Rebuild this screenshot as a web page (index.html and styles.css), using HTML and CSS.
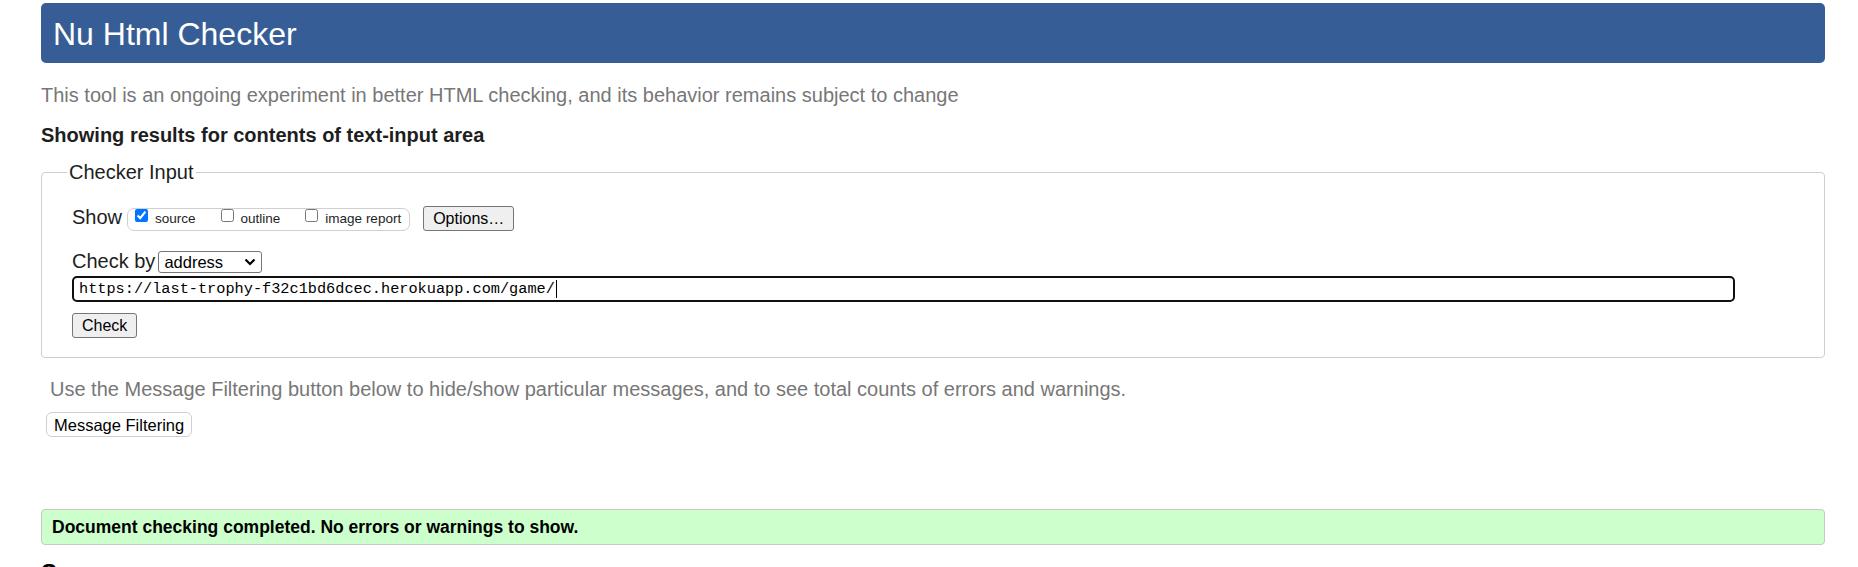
FILE: index.html
```html
<!DOCTYPE html>
<html lang="en">
<head>
<meta charset="utf-8">
<title>Nu Html Checker</title>
<link rel="stylesheet" href="styles.css">
</head>
<body>
  <h1 class="banner">Nu Html Checker</h1>
  <p class="intro">This tool is an ongoing experiment in better HTML checking, and its behavior remains subject to change</p>
  <p class="showing">Showing results for contents of text-input area</p>

  <fieldset class="checker">
    <legend class="checker-legend">Checker Input</legend>
    <div class="form">
      <div class="show-row">
        <span class="row-label">Show</span>
        <div class="opts">
          <label class="opt"><input type="checkbox" class="cb" checked><span class="opt-text">source</span></label>
          <label class="opt"><input type="checkbox" class="cb"><span class="opt-text">outline</span></label>
          <label class="opt"><input type="checkbox" class="cb"><span class="opt-text">image report</span></label>
        </div>
        <button class="btn btn-options" type="button">Options…</button>
      </div>
      <div class="by-row">
        <span class="row-label by-label">Check by</span>
        <div class="select">
          <span class="select-text">address</span>
          <svg class="chev" width="12" height="8" viewBox="0 0 12 8"><path d="M1.5 1.5 L6 6 L10.5 1.5" fill="none" stroke="#000" stroke-width="2.2"/></svg>
        </div>
      </div>
      <div class="url-field"><span class="url-text">https://last-trophy-f32c1bd6dcec.herokuapp.com/game/</span><span class="caret"></span></div>
      <button class="btn btn-check" type="button">Check</button>
    </div>
  </fieldset>

  <p class="filter-note">Use the Message Filtering button below to hide/show particular messages, and to see total counts of errors and warnings.</p>
  <button class="btn-filter" type="button">Message Filtering</button>

  <div class="success">Document checking completed. No errors or warnings to show.</div>
  <h2 class="source-title">Source</h2>
</body>
</html>
```

FILE: styles.css
```css
html, body {
  margin: 0;
  background: #fff;
}
body {
  padding: 3px 33px 0 41px;
  font-family: "Liberation Sans", Arial, sans-serif;
  color: #000;
  height: 564px;
  overflow: hidden;
}

.banner {
  margin: 0;
  height: 60px;
  box-sizing: border-box;
  padding: 13px 12px 10px;
  background: #365d95;
  color: #fff;
  border-radius: 5px;
  font-size: 32px;
  font-weight: normal;
  line-height: 37px;
}

.intro {
  margin: 21px 0 0;
  font-size: 20px;
  line-height: 23px;
  color: #777;
}

.showing {
  margin: 17px 0 0;
  font-size: 20px;
  line-height: 23px;
  font-weight: bold;
  color: #1e1e1e;
}

.checker {
  margin: 14px 0 0;
  border: 1px solid #cfcfcf;
  border-radius: 4px;
  padding: 22px 1px 19px 25px;
  min-width: 0;
}
.checker-legend {
  padding: 0 2px;
  font-size: 20px;
  line-height: 23px;
  color: #1e1e1e;
}

.form {
  padding-left: 5px;
}

.show-row {
  display: flex;
  align-items: flex-start;
  height: 26px;
}
.row-label {
  font-size: 20px;
  line-height: 23px;
  color: #1e1e1e;
  margin-right: 5px;
}
.opts {
  display: flex;
  align-items: flex-start;
  gap: 25px;
  margin-top: 2px;
  height: 23px;
  box-sizing: border-box;
  border: 1px solid #d0d0d0;
  border-radius: 7px;
  padding: 0 8px 0 7px;
}
.opt {
  display: flex;
  align-items: flex-start;
}
.cb {
  margin: 0 7px 0 0;
  width: 13px;
  height: 13px;
}
.opt-text {
  font-size: 13.5px;
  line-height: 16px;
  margin-top: 2px;
  color: #1e1e1e;
}

.btn {
  height: 25px;
  box-sizing: border-box;
  padding: 0 9px;
  background: #efefef;
  border: 1px solid #767676;
  border-radius: 3px;
  font-family: "Liberation Sans", Arial, sans-serif;
  font-size: 16px;
  line-height: 23px;
  color: #000;
}
.btn-options {
  margin-left: 13px;
}

.by-row {
  display: flex;
  align-items: flex-start;
  margin-top: 18px;
}
.by-label {
  margin-right: 3px;
}
.select {
  display: flex;
  align-items: center;
  justify-content: space-between;
  width: 104px;
  height: 22px;
  box-sizing: border-box;
  margin-top: 1px;
  border: 1px solid #767676;
  border-radius: 3px;
  padding: 0 5px 0 5px;
  background: #fff;
}
.select-text {
  font-size: 16.5px;
  line-height: 20px;
}
.chev {
  display: block;
}

.url-field {
  display: flex;
  align-items: center;
  width: 95%;
  height: 26px;
  box-sizing: border-box;
  margin-top: 3px;
  border: 2px solid #101010;
  border-radius: 5px;
  padding: 0 5px;
  background: #fff;
}
.url-text {
  font-family: "Liberation Mono", "Courier New", monospace;
  font-size: 15.25px;
  line-height: 20px;
  color: #000;
  white-space: nowrap;
}
.caret {
  display: inline-block;
  width: 1px;
  height: 18px;
  background: #000;
  margin-left: 1px;
}

.btn-check {
  display: block;
  margin-top: 11px;
}

.filter-note {
  margin: 20px 0 0;
  padding-left: 9px;
  font-size: 20px;
  line-height: 23px;
  color: #777;
}

.btn-filter {
  display: block;
  margin: 11px 0 0 5px;
  height: 25px;
  box-sizing: border-box;
  padding: 0 7px;
  background: #fff;
  border: 1px solid #cfcfcf;
  border-radius: 6px;
  font-family: "Liberation Sans", Arial, sans-serif;
  font-size: 16.5px;
  line-height: 22px;
  color: #000;
}

.success {
  margin-top: 72px;
  height: 36px;
  box-sizing: border-box;
  padding: 7px 10px;
  border: 1px solid #c8c8c8;
  border-radius: 4px;
  background: #ccffcc;
  font-size: 17.5px;
  line-height: 20px;
  font-weight: bold;
  color: #000;
}

.source-title {
  margin: 14px 0 0;
  font-size: 24px;
  line-height: 28px;
  font-weight: bold;
  color: #000;
}
```
